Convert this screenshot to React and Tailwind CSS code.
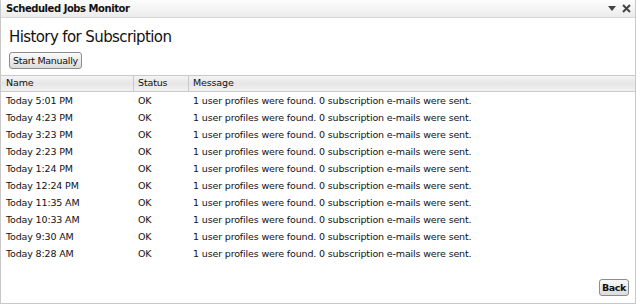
import React from "react";

const rows = [
  "Today 5:01 PM",
  "Today 4:23 PM",
  "Today 3:23 PM",
  "Today 2:23 PM",
  "Today 1:24 PM",
  "Today 12:24 PM",
  "Today 11:35 AM",
  "Today 10:33 AM",
  "Today 9:30 AM",
  "Today 8:28 AM",
];

export default function App() {
  return (
    <div
      className="w-[640px] h-[306px] bg-white text-[#111] overflow-hidden"
      style={{ fontFamily: '"DejaVu Sans", "Liberation Sans", sans-serif' }}
    >
      <div className="w-[636px] h-[304px] border-l border-r border-b border-[#c8c8c8] flex flex-col">
        <div className="h-[18px] flex items-center justify-between pl-[5px] pr-[4px] border-b border-[#d6d6d6] bg-gradient-to-b from-[#fdfdfd] to-[#ececec]">
          <span className="text-[10px] font-bold tracking-[-0.45px]">Scheduled Jobs Monitor</span>
          <div className="flex items-center gap-[6px]">
            <svg width="8" height="5" viewBox="0 0 8 5">
              <path d="M0 0 L8 0 L4 5 Z" fill="#444" />
            </svg>
            <svg width="9" height="9" viewBox="0 0 9 9">
              <path d="M1 1 L8 8 M8 1 L1 8" stroke="#444" strokeWidth="2" />
            </svg>
          </div>
        </div>
        <div className="pl-[8px] pt-[9px]">
          <div className="text-[15px] leading-[20px] tracking-[-0.6px]">History for Subscription</div>
          <button className="mt-[1px] h-[17px] px-[3px] text-[9.5px] tracking-[-0.3px] border border-[#8c8c8c] rounded-[3px] bg-gradient-to-b from-[#fafafa] to-[#dcdcdc] leading-none">
            Start Manually
          </button>
        </div>
        <div className="mt-[4px] flex-1 flex flex-col">
          <div className="h-[17px] flex border-t border-b border-[#c9c9c9] bg-gradient-to-b from-[#f4f4f4] via-[#e6e6e6] to-[#f2f2f2] text-[9.5px] tracking-[-0.15px]">
            <div className="w-[133px] pl-[5px] border-r border-[#c9c9c9] flex items-center">Name</div>
            <div className="w-[55px] pl-[4px] border-r border-[#c9c9c9] flex items-center">Status</div>
            <div className="flex-1 pl-[4px] flex items-center">Message</div>
          </div>
          <div className="pt-[1px] text-[9.5px] tracking-[-0.15px]">
            {rows.map((r) => (
              <div key={r} className="h-[17px] flex items-center">
                <div className="w-[133px] pl-[5px]">{r}</div>
                <div className="w-[55px] pl-[4px]">OK</div>
                <div className="flex-1 pl-[4px]">1 user profiles were found. 0 subscription e-mails were sent.</div>
              </div>
            ))}
          </div>
          <div className="flex-1" />
          <div className="flex justify-end pr-[6px] pb-[7px]">
            <button className="h-[17px] px-[2px] text-[9.5px] tracking-[-0.4px] font-bold border border-[#8c8c8c] rounded-[3px] bg-gradient-to-b from-[#fafafa] to-[#dcdcdc] leading-none">
              Back
            </button>
          </div>
        </div>
      </div>
    </div>
  );
}
